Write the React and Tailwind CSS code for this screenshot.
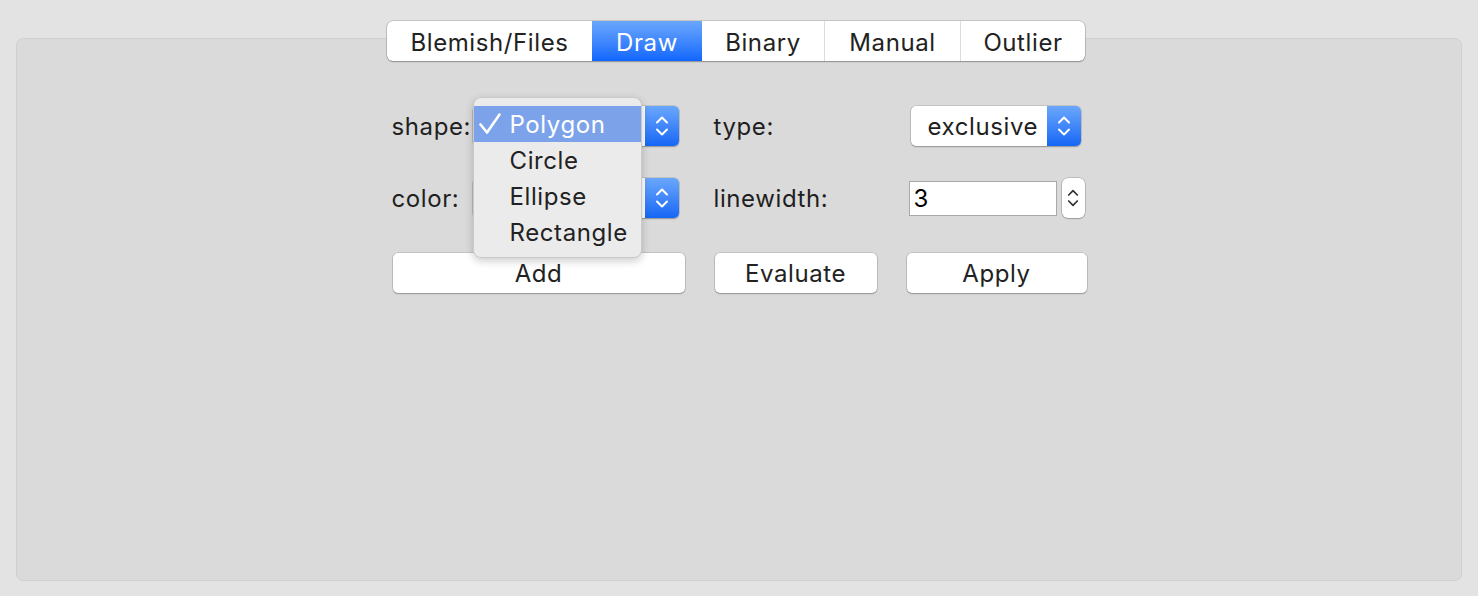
import React from "react";

const font = { fontFamily: "Inter, 'Liberation Sans', sans-serif", letterSpacing: "0.6px" };

function Chevrons({ color = "white", w = 14, h = 24, sw = 2 }) {
  return (
    <svg width={w} height={h} viewBox="0 0 14 24" fill="none" stroke={color} strokeWidth={sw} strokeLinecap="round" strokeLinejoin="round">
      <path d="M2 8.5 L7 3.5 L12 8.5" />
      <path d="M2 15.5 L7 20.5 L12 15.5" />
    </svg>
  );
}

function BlueStepper() {
  return (
    <div className="w-[34px] h-full flex items-center justify-center rounded-r-[5px] bg-gradient-to-b from-[#6aa6fb] to-[#1466f5]">
      <Chevrons />
    </div>
  );
}

function Select({ value, className }) {
  return (
    <div className={"h-[40px] flex items-stretch rounded-[5px] bg-white shadow-[0_0_0_0.5px_rgba(0,0,0,0.2),0_1px_1.5px_rgba(0,0,0,0.25)] " + className}>
      <div className="flex-1 flex items-center pl-[17px] pt-[2px] text-[24px] text-[#1f1f1f]">{value}</div>
      <BlueStepper />
    </div>
  );
}

function Button({ children, className }) {
  return (
    <div className={"h-[40px] flex items-center justify-center pt-[2px] rounded-[5px] bg-white text-[24px] text-[#222] shadow-[0_0_0_0.5px_rgba(0,0,0,0.2),0_1px_1.5px_rgba(0,0,0,0.25)] " + className}>
      {children}
    </div>
  );
}

export default function App() {
  const tabs = [
    { name: "Blemish/Files", w: "w-[205px]" },
    { name: "Draw", w: "w-[110px]", active: true },
    { name: "Binary", w: "w-[122px]" },
    { name: "Manual", w: "w-[136px]" },
    { name: "Outlier", w: "w-[125px]" },
  ];
  return (
    <div className="w-[1478px] h-[596px] bg-[#e3e3e3] pt-[21px] overflow-hidden" style={font}>
      <div className="relative z-10 flex justify-center">
        <div className="ml-[-6px] flex h-[40px] rounded-[6px] bg-white overflow-hidden shadow-[0_0_0_0.5px_rgba(0,0,0,0.25),0_1px_1.5px_rgba(0,0,0,0.25)]">
          {tabs.map((t, i) => (
            <div
              key={t.name}
              className={
                "flex items-center justify-center pt-[3px] text-[24px] " +
                t.w +
                " " +
                (t.active
                  ? "bg-gradient-to-b from-[#6aa6fc] to-[#0f66fd] text-white"
                  : "text-[#222] " + (i > 0 && !tabs[i - 1].active ? "border-l border-[#dcdcdc]" : ""))
              }
            >
              {t.name}
            </div>
          ))}
        </div>
      </div>
      <div className="mt-[-23px] ml-[16px] w-[1446px] h-[543px] rounded-[7px] bg-[#dadada] border border-[#d0d0d0] pt-[67px]">
        <div className="relative mx-auto w-[695px] text-[24px] text-[#1f1f1f]">
          {/* Row 1 */}
          <div className="flex items-center h-[40px]">
            <div className="w-[81px] pt-[2px]">shape:</div>
            <Select value="" className="w-[206px]" />
            <div className="w-[35px]" />
            <div className="w-[197px] pt-[2px]">type:</div>
            <Select value="exclusive" className="w-[170px]" />
          </div>
          {/* Row 2 */}
          <div className="flex items-center h-[40px] mt-[32px]">
            <div className="w-[81px] pt-[2px]">color:</div>
            <Select value="" className="w-[206px]" />
            <div className="w-[35px]" />
            <div className="w-[195px] pt-[2px]">linewidth:</div>
            <div className="w-[148px] h-[35px] bg-white border border-[#a9a9a9] flex items-center pl-[4px] pt-[2px] text-black">3</div>
            <div className="ml-[5px] w-[23px] h-[40px] bg-white rounded-[6px] flex items-center justify-center shadow-[0_0_0_0.5px_rgba(0,0,0,0.25),0_1px_1.5px_rgba(0,0,0,0.2)]">
              <Chevrons color="#333" w={12} h={26} sw={2} />
            </div>
          </div>
          {/* Row 3 */}
          <div className="flex items-center h-[40px] mt-[35px]">
            <Button className="ml-[1px] w-[292px]">Add</Button>
            <Button className="ml-[30px] w-[162px]">Evaluate</Button>
            <Button className="ml-[30px] w-[180px]">Apply</Button>
          </div>

          {/* Popup menu overlay */}
          <div className="absolute left-[81px] top-[-9px] w-[169px] h-[161px] rounded-[8px] bg-[#ebebeb] border border-[#c9c9c9] shadow-[0_3px_8px_rgba(0,0,0,0.2)] pt-[8px] pb-[8px] overflow-hidden">
            <div className="h-[36px] flex items-center bg-[#7ca3ea] text-white">
              <span className="w-[36px] pl-[5px] flex items-center">
                <svg width="22" height="22" viewBox="0 0 22 22" fill="none" stroke="white" strokeWidth="2.6" strokeLinecap="round" strokeLinejoin="round">
                  <path d="M1.5 11.5 L8 19.5 L20.5 1.5" />
                </svg>
              </span>
              <span className="pt-[2px]">Polygon</span>
            </div>
            {["Circle", "Ellipse", "Rectangle"].map((s) => (
              <div key={s} className="h-[36px] flex items-center pl-[36px] pt-[2px] text-[#222]">{s}</div>
            ))}
          </div>
        </div>
      </div>
    </div>
  );
}
